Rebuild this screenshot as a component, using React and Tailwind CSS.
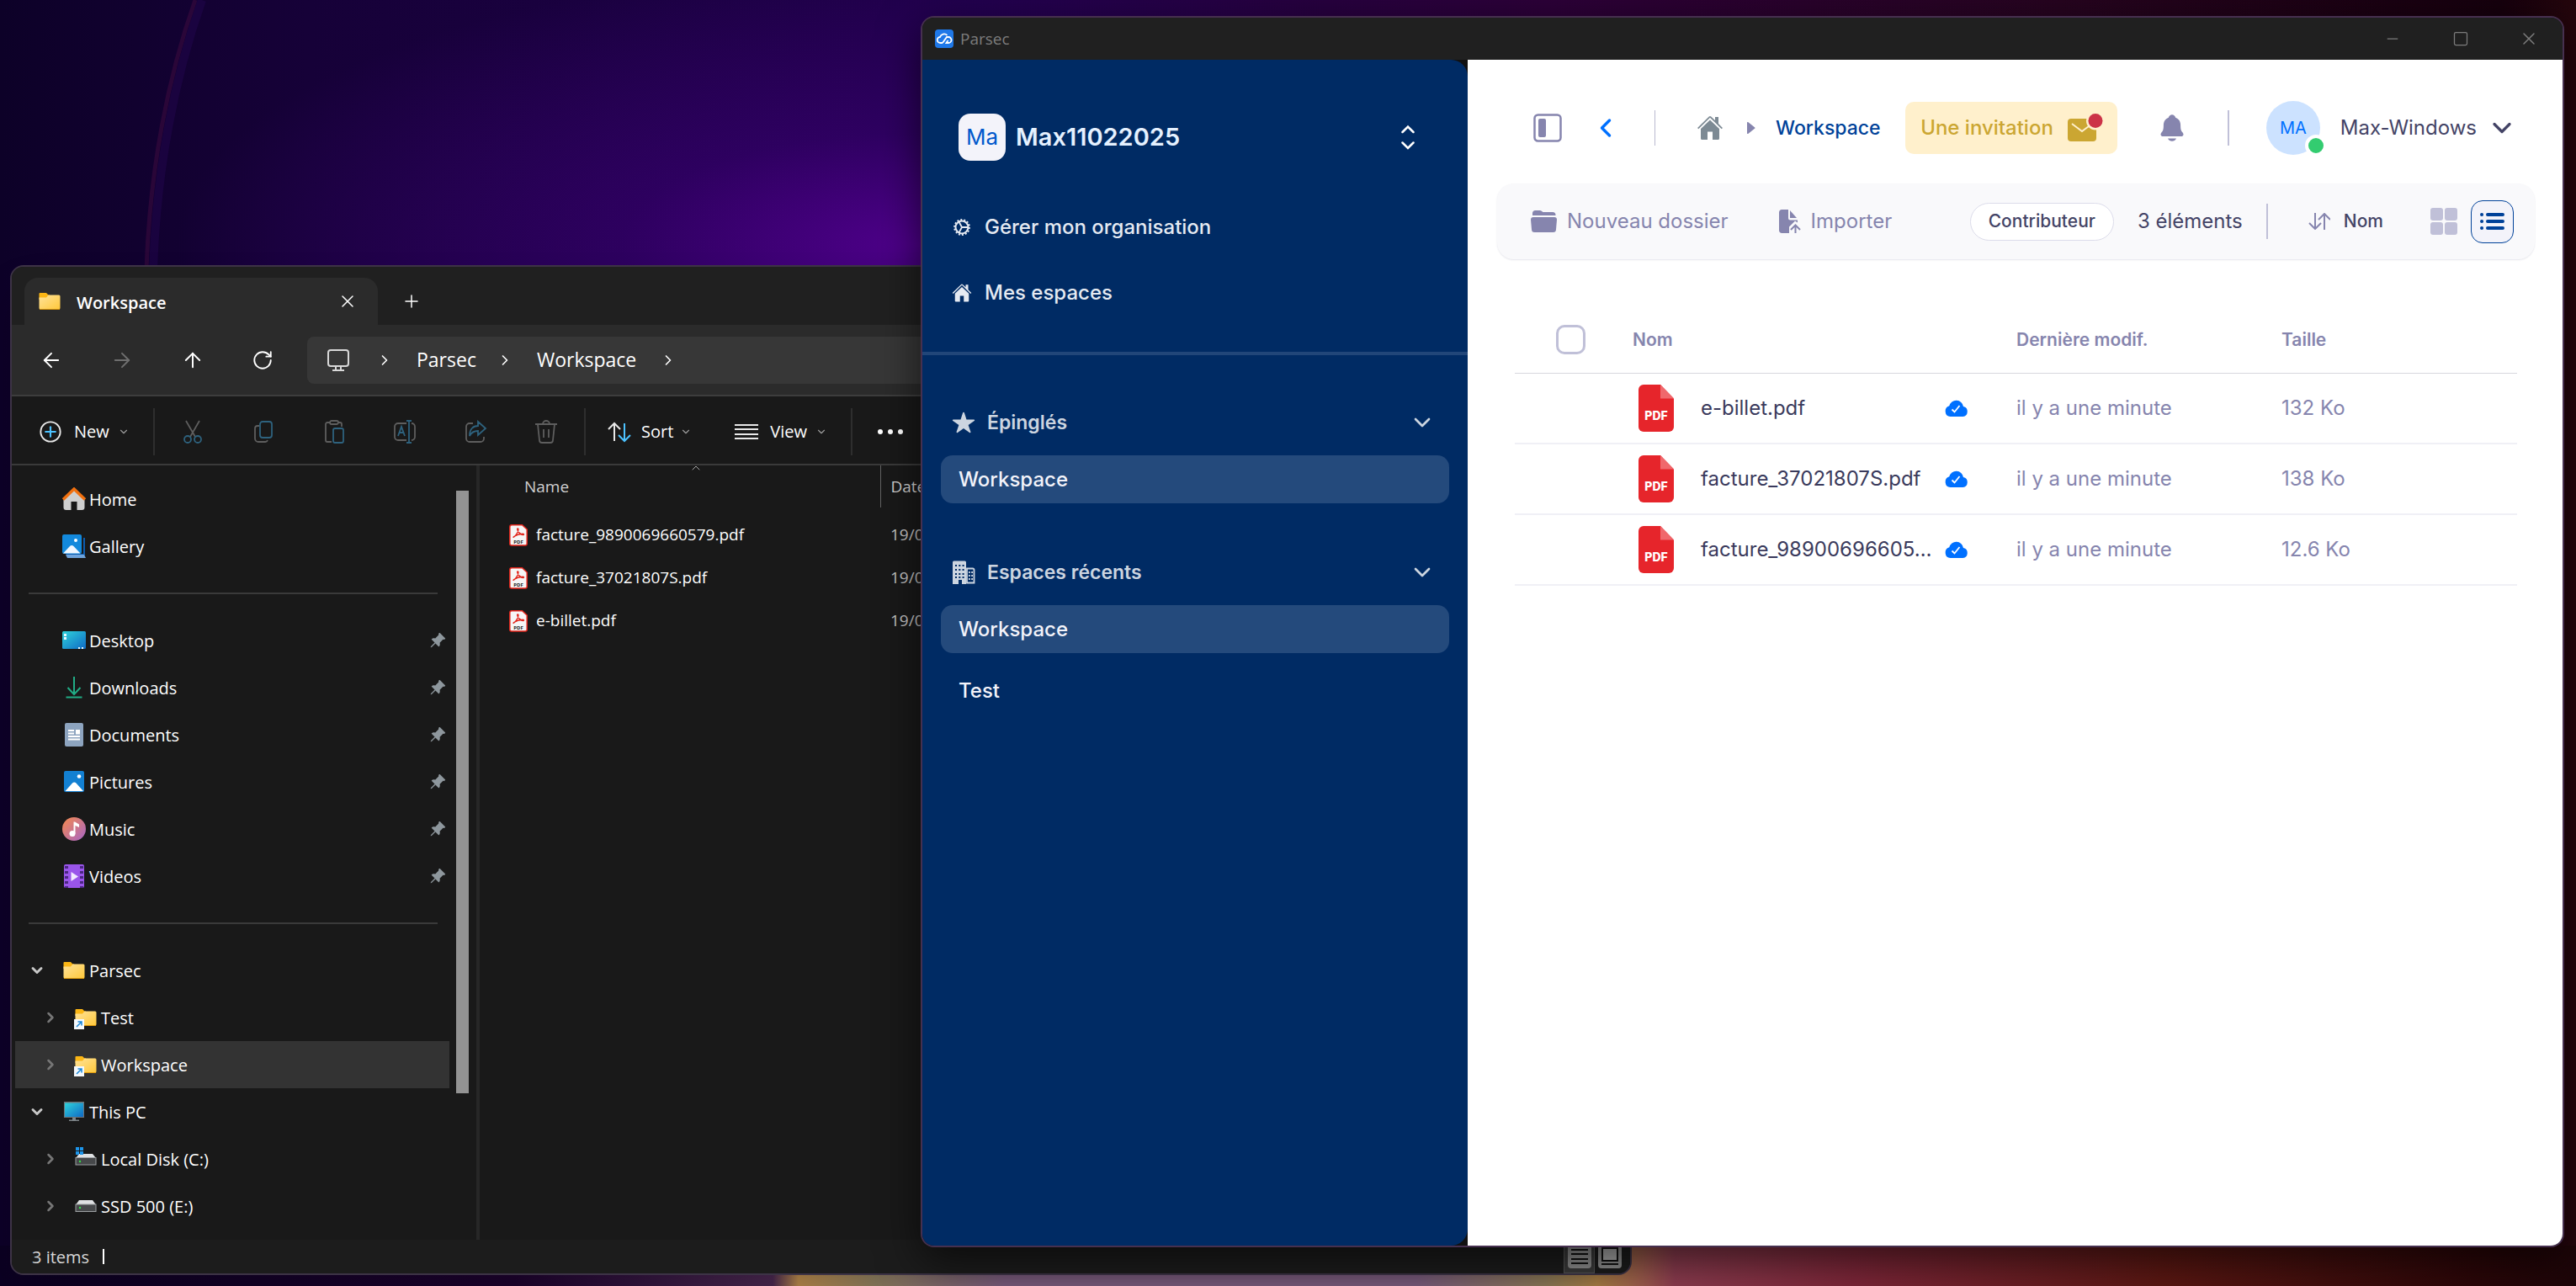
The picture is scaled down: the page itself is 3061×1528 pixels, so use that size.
import {
  ArrowLeft,
  ArrowRight,
  ArrowUp,
  ChevronDown,
  ChevronLeft,
  ChevronRight,
  ChevronUp,
  CirclePlus,
  Minus,
  Plus,
  RotateCw,
  Square,
  X,
} from 'lucide-react'
import { BsPinAngleFill } from 'react-icons/bs'
import { IoNotifications, IoStar } from 'react-icons/io5'

const quickAccess = [
  { label: 'Desktop', icon: DesktopIcon },
  { label: 'Downloads', icon: DownloadsIcon },
  { label: 'Documents', icon: DocumentsIcon },
  { label: 'Pictures', icon: PicturesIcon },
  { label: 'Music', icon: MusicIcon },
  { label: 'Videos', icon: VideosIcon },
]

const explorerFiles = [
  'facture_9890069660579.pdf',
  'facture_37021807S.pdf',
  'e-billet.pdf',
]

const parsecFiles = [
  { name: 'e-billet.pdf', size: '132 Ko' },
  { name: 'facture_37021807S.pdf', size: '138 Ko' },
  { name: 'facture_98900696605…', size: '12.6 Ko' },
]

export default function App() {
  return (
    <div className="relative h-screen w-full overflow-hidden bg-[#12022c]">
      <Wallpaper />
      <ExplorerWindow />
      <ParsecWindow />
    </div>
  )
}

function Wallpaper() {
  return (
    <div className="absolute inset-0" aria-hidden="true">
      <div className="absolute inset-0 bg-[linear-gradient(90deg,#0d0128_0%,#160138_12%,#1f004a_38%,#2c0038_60%,#26041f_80%,#16000d_97%,#25060c_100%)]" />
      <div className="absolute inset-0 bg-[radial-gradient(ellipse_880px_330px_at_1090px_290px,#4e008a_0%,#34006abb_40%,transparent_100%)]" />
      <svg viewBox="0 0 300 320" className="absolute top-0 left-0 h-80 w-[300px]" fill="none">
        <path d="M232 0C200 90 178 200 174 320" stroke="#3a0a3e" strokeWidth="5" opacity="0.6" />
        <path d="M240 0C208 90 186 200 182 320" stroke="#22064e" strokeWidth="10" opacity="0.5" />
      </svg>
      <div className="absolute inset-x-0 bottom-0 h-12 bg-[linear-gradient(90deg,#0b0122_0%,#1d032e_20%,#4a2850_30%,#b98a4c_31%,#8f7f60_34%,#86658a_39%,#86658a_55%,#9a8560_60%,#b98a4c_62%,#8a3b4e_65%,#7c2638_72%,#5a1712_84%,#2b0608_96%,#1d0508_100%)]" />
    </div>
  )
}

/* ---------- Windows explorer ---------- */

function ExplorerWindow() {
  return (
    <section
      aria-label="Workspace"
      className="absolute top-[315px] right-[1122px] bottom-[13px] left-3 flex flex-col overflow-hidden rounded-2xl border-2 border-[#3d3346] bg-[#191919] font-['Open_Sans',sans-serif] text-xl text-white shadow-2xl"
    >
      <div className="flex h-[69px] shrink-0 items-end bg-[#202020] pl-[15px]">
        <div className="flex h-14 w-[420px] items-center rounded-t-2xl bg-[#2b2b2b] pr-6 pl-4">
          <FolderIcon className="size-7" />
          <h1 className="ml-[18px] pt-1 font-semibold">Workspace</h1>
          <button aria-label="Close tab" className="ml-auto">
            <X className="size-6" strokeWidth={1.5} />
          </button>
        </div>
        <button aria-label="New tab" className="ml-7 flex h-14 items-center">
          <Plus className="size-6" strokeWidth={1.5} />
        </button>
      </div>

      <div className="flex h-[85px] shrink-0 items-center border-b-2 border-[#3d3d3d] bg-[#2b2b2b] pl-[33px]">
        <nav aria-label="History" className="flex items-center gap-14">
          <button aria-label="Back">
            <ArrowLeft className="size-7" strokeWidth={1.7} />
          </button>
          <button aria-label="Forward" className="text-[#6f6f6f]">
            <ArrowRight className="size-7" strokeWidth={1.7} />
          </button>
          <button aria-label="Up">
            <ArrowUp className="size-7" strokeWidth={1.7} />
          </button>
          <button aria-label="Refresh">
            <RotateCw className="size-[26px]" strokeWidth={1.7} />
          </button>
        </nav>
        <div className="ml-10 flex h-14 flex-1 items-center rounded-lg bg-[#373737] pl-6 text-[23px]">
          <MonitorIcon />
          <ChevronRight className="ml-8 size-5" />
          <span className="ml-7">Parsec</span>
          <ChevronRight className="ml-6 size-5" />
          <span className="ml-7">Workspace</span>
          <ChevronRight className="ml-7 size-5" />
        </div>
      </div>

      <CommandBar />

      <div className="flex min-h-0 flex-1">
        <ExplorerTree />
        <ExplorerFiles />
      </div>

      <footer className="flex h-10 shrink-0 items-center bg-[#1c1c1c] pl-6 text-[#d6d6d6]">
        <span className="pt-0.5">3 items</span>
        <span className="ml-4 h-[18px] w-0.5 bg-white" />
        <button
          aria-label="Details view"
          className="ml-auto flex h-full w-[37px] items-center justify-center border border-[#555] bg-[#3a3a3a]"
        >
          <svg viewBox="0 0 28 28" className="size-7">
            <rect width="28" height="28" rx="4" fill="#8f8f8f" />
            <path d="M4 6h20M4 11h20M4 17h20M4 22h20" stroke="#111" strokeWidth="2" />
          </svg>
        </button>
        <button aria-label="Large icons view" className="mr-2.5 ml-1">
          <svg viewBox="0 0 28 28" className="size-7">
            <rect width="28" height="28" rx="4" fill="#8f8f8f" />
            <rect x="5" y="4" width="18" height="15" fill="#ababab" stroke="#111" strokeWidth="2" />
            <path d="M4 23h20" stroke="#111" strokeWidth="2" />
          </svg>
        </button>
      </footer>
    </section>
  )
}

function CommandBar() {
  return (
    <div className="flex h-[82px] shrink-0 items-center border-b-2 border-[#3a3a3a] pt-1 pl-8">
      <button className="flex w-[136px] items-center">
        <span className="relative">
          <CirclePlus className="size-7 text-[#e8e8e8]" strokeWidth={1.6} />
          <Plus className="absolute inset-0 m-auto size-5 text-[#4cc2ff]" strokeWidth={2.5} />
        </span>
        <span className="ml-3.5">New</span>
        <ChevronDown className="ml-2.5 size-3.5 text-[#9c9c9c]" />
      </button>
      <CommandSeparator />
      <div className="flex gap-14 px-[31px] text-[#5e5e5e]">
        <IconButton label="Cut">
          <path d="M6 1l11 19M22 1L11 20" />
          <circle cx="8" cy="23" r="4" stroke="#2e627e" />
          <circle cx="20" cy="23" r="4" stroke="#2e627e" />
        </IconButton>
        <IconButton label="Copy">
          <path d="M9 7H7a3 3 0 0 0-3 3v12a4 4 0 0 0 4 4h8a3 3 0 0 0 3-2" />
          <rect x="10" y="2" width="14" height="19" rx="3" stroke="#2e627e" />
        </IconButton>
        <IconButton label="Paste">
          <path d="M10 3H6a2 2 0 0 0-2 2v19a2 2 0 0 0 2 2h5M19 3h2a2 2 0 0 1 2 2v3" />
          <rect x="9" y="1" width="10" height="4" rx="2" />
          <rect x="13" y="10" width="12" height="17" rx="2" stroke="#2e627e" />
        </IconButton>
        <IconButton label="Rename">
          <path d="M16 4H6a4 4 0 0 0-4 4v12a4 4 0 0 0 4 4h10M22 4a4 4 0 0 1 4 4v12a4 4 0 0 1-4 4" />
          <path d="M6 19l4-11 4 11M7 15h6M19 1v26M16 1h6M16 27h6" stroke="#2e627e" />
        </IconButton>
        <IconButton label="Share">
          <path d="M11 4H7a4 4 0 0 0-4 4v14a4 4 0 0 0 4 4h13a4 4 0 0 0 4-4v-2" />
          <path d="M17 2l9 8-9 8v-5c-5 0-8 2-10 6 0-8 4-12 10-12z" stroke="#2e627e" />
        </IconButton>
        <IconButton label="Delete">
          <path d="M1 5h26M10 5a4 4 0 0 1 8 0M4 5l2 19a3 3 0 0 0 3 3h10a3 3 0 0 0 3-3l2-19M11 11v10M17 11v10" />
        </IconButton>
      </div>
      <CommandSeparator />
      <button className="ml-[26px] flex items-center">
        <svg viewBox="0 0 28 28" className="size-7" fill="none" strokeWidth="2">
          <path d="M8 25V4M1 11l7-7 7 7" stroke="#e8e8e8" />
          <path d="M20 4v21M13 18l7 7 7-7" stroke="#4cc2ff" />
        </svg>
        <span className="ml-3">Sort</span>
        <ChevronDown className="ml-2 size-3.5 text-[#9c9c9c]" />
      </button>
      <button className="ml-[51px] flex items-center">
        <svg viewBox="0 0 28 28" className="size-7" stroke="#e8e8e8" strokeWidth="2">
          <path d="M0 6h28M0 11h28M0 17h28M0 22h28" />
        </svg>
        <span className="ml-3.5">View</span>
        <ChevronDown className="ml-2.5 size-3.5 text-[#9c9c9c]" />
      </button>
      <span className="ml-7 h-14 w-0.5 bg-[#2e2e2e]" />
      <button aria-label="See more" className="ml-7 flex gap-1.5 px-0.5">
        <span className="size-1.5 rounded-full bg-white" />
        <span className="size-1.5 rounded-full bg-white" />
        <span className="size-1.5 rounded-full bg-white" />
      </button>
    </div>
  )
}

function CommandSeparator() {
  return <span className="h-14 w-0.5 shrink-0 bg-[#2e2e2e]" />
}

function IconButton({ label, children }) {
  return (
    <button aria-label={label} className="size-7 shrink-0">
      <svg
        viewBox="0 0 28 28"
        className="size-7"
        fill="none"
        stroke="currentColor"
        strokeWidth="1.8"
      >
        {children}
      </svg>
    </button>
  )
}

function ExplorerTree() {
  return (
    <aside className="flex w-[556px] shrink-0 border-r-4 border-[#272727]">
      <ul className="flex-1 pt-3 pl-1">
        <TreeRow icon={HomeIcon} label="Home" />
        <TreeRow icon={GalleryIcon} label="Gallery" />
        <TreeDivider />
        {quickAccess.map((item) => (
          <TreeRow key={item.label} icon={item.icon} label={item.label} pinned />
        ))}
        <TreeDivider />
        <TreeRow icon={FolderIcon} label="Parsec" expanded />
        <TreeRow icon={LinkedFolderIcon} label="Test" nested />
        <TreeRow icon={LinkedFolderIcon} label="Workspace" nested selected />
        <TreeRow icon={PcIcon} label="This PC" expanded />
        <TreeRow icon={SystemDiskIcon} label="Local Disk (C:)" nested />
        <TreeRow icon={DiskIcon} label="SSD 500 (E:)" nested />
      </ul>
      <div className="ml-2 w-6 pt-[30px]">
        <div className="h-[716px] w-[15px] bg-[#939393]" />
      </div>
    </aside>
  )
}

function TreeRow({ icon: Icon, label, pinned, expanded, nested, selected }) {
  return (
    <li
      className={`flex h-14 items-center pr-1 ${selected ? 'bg-[#333333]' : ''}`}
    >
      <span
        className={`flex shrink-0 items-center ${nested ? 'w-[70px] pl-8' : 'w-14 pl-4'}`}
      >
        {expanded && <ChevronDown className="size-5 text-[#c8c8c8]" strokeWidth={3.5} />}
        {nested && <ChevronRight className="size-5 text-[#777]" strokeWidth={3} />}
      </span>
      <Icon className="size-7 shrink-0" />
      <span className="ml-1 pt-0.5">{label}</span>
      {pinned && <BsPinAngleFill className="ml-auto size-5 text-[#8e979d]" />}
    </li>
  )
}

function TreeDivider() {
  return (
    <li className="flex h-14 items-center pr-3.5 pl-4" aria-hidden="true">
      <span className="h-0.5 w-full bg-[#3a3a3a]" />
    </li>
  )
}

function ExplorerFiles() {
  return (
    <div className="relative flex-1">
      <ChevronUp className="absolute top-[-5px] left-[249px] size-4 text-[#aaa]" strokeWidth={1.5} />
      <table className="w-full table-fixed text-left text-[19px]">
        <thead>
          <tr className="h-[50px] text-[#d0d0d0]">
            <th className="w-[476px] border-r border-[#636363] pl-[53px] font-normal">
              Name
            </th>
            <th className="pl-3 font-normal">Date</th>
          </tr>
        </thead>
        <tbody>
          <tr className="h-[7px]" />
          {explorerFiles.map((name) => (
            <tr key={name} className="h-[51px]">
              <td className="pl-[35px]">
                <span className="flex items-center">
                  <AcrobatIcon />
                  <span className="ml-2.5">{name}</span>
                </span>
              </td>
              <td className="pl-3 text-[#c4c4c4]">19/0</td>
            </tr>
          ))}
        </tbody>
      </table>
    </div>
  )
}

/* ---------- Parsec ---------- */

function ParsecWindow() {
  return (
    <section
      aria-label="Parsec"
      className="absolute top-[19px] right-3.5 bottom-[46px] left-[1094px] flex flex-col overflow-hidden rounded-2xl border-2 border-[#46304f] bg-[#111] shadow-[0_16px_50px_0_rgba(0,0,0,0.6)]"
    >
      <header className="flex h-[50px] shrink-0 items-center bg-[#202020] pl-[15px] font-['Open_Sans',sans-serif] text-[19px] text-[#7c7c7c]">
        <ParsecLogo />
        <span className="ml-2">Parsec</span>
        <div className="ml-auto flex h-full">
          <button aria-label="Minimize" className="flex w-[81px] items-center justify-center">
            <Minus className="size-5" strokeWidth={1.5} />
          </button>
          <button aria-label="Maximize" className="flex w-[81px] items-center justify-center">
            <Square className="size-5" strokeWidth={1.5} />
          </button>
          <button aria-label="Close" className="flex w-[81px] items-center justify-center">
            <X className="size-6" strokeWidth={1.5} />
          </button>
        </div>
      </header>
      <div className="flex min-h-0 flex-1 font-['Inter',sans-serif]">
        <ParsecSidebar />
        <main className="min-w-0 flex-1 bg-white">
          <ParsecHeader />
          <Toolbar />
          <FileTable />
        </main>
      </div>
    </section>
  )
}

function ParsecSidebar() {
  return (
    <aside className="w-[648px] shrink-0 rounded-r-[20px] bg-[#002b64] text-2xl font-medium">
      <button className="mt-16 flex h-14 w-full items-center pr-[63px] pl-[43px]">
        <span className="flex size-14 items-center justify-center rounded-[14px] bg-[#f3f3fa] text-[26px] font-normal text-[#0058cc]">
          Ma
        </span>
        <span className="ml-3 text-[29px] font-semibold text-[#e5f1ff]">
          Max11022025
        </span>
        <svg
          viewBox="0 0 16 30"
          className="ml-auto h-[30px] w-4"
          fill="none"
          stroke="#fff"
          strokeWidth="2.5"
          strokeLinecap="round"
        >
          <path d="M1.500 9L8 2.500 14.500 9M1.500 21.500L8 28l6.500-6.500" />
        </svg>
      </button>

      <nav className="mt-10 border-b-4 border-[#214679] pb-[31px] text-[#e5eaf2]">
        <a href="#organisation" className="flex h-[78px] items-center pl-[35px]">
          <CogIcon />
          <span className="ml-[15px]">Gérer mon organisation</span>
        </a>
        <a href="#espaces" className="flex h-[78px] items-center pl-[35px]">
          <HouseIcon className="size-6" />
          <span className="ml-[15px]">Mes espaces</span>
        </a>
      </nav>

      <div className="mt-[60px] space-y-[62px] px-[22px]">
        <SidebarGroup title="Épinglés" icon={<IoStar className="size-7" />}>
          <SidebarLink active>Workspace</SidebarLink>
        </SidebarGroup>
        <SidebarGroup title="Espaces récents" icon={<BuildingIcon />}>
          <SidebarLink active>Workspace</SidebarLink>
          <SidebarLink>Test</SidebarLink>
        </SidebarGroup>
      </div>
    </aside>
  )
}

function SidebarGroup({ title, icon, children }) {
  return (
    <section>
      <button className="mb-[19px] flex h-10 w-full items-center pr-4 pl-[13px] text-[23px] font-semibold text-[#ccd5e0]">
        {icon}
        <span className="ml-3.5">{title}</span>
        <ChevronDown className="ml-auto size-8" />
      </button>
      <div className="space-y-4">{children}</div>
    </section>
  )
}

function SidebarLink({ active, children }) {
  return (
    <a
      href="#workspace"
      className={`flex h-[57px] items-center rounded-[14px] pl-[21px] text-[#f3f3fa] ${active ? 'bg-[#244a7c]' : ''}`}
    >
      {children}
    </a>
  )
}

function ParsecHeader() {
  return (
    <header className="flex items-center pt-[49px] pr-[54px] pb-[34px] pl-[78px] text-2xl">
      <button aria-label="Menu">
        <svg viewBox="0 0 34 34" className="size-[34px]">
          <rect x="1.5" y="1.5" width="31" height="31" rx="4" fill="none" stroke="#8685ae" strokeWidth="2.5" />
          <rect x="6" y="6" width="9" height="22" rx="2" fill="#8685ae" />
        </svg>
      </button>
      <button aria-label="Retour" className="ml-[34px] text-[#0070ff]">
        <ChevronLeft className="size-9" strokeWidth={2.3} />
      </button>
      <span className="ml-10 h-[42px] w-px bg-[#b9b9d0]" />
      <nav className="ml-[49px] flex items-center">
        <a href="#home" aria-label="Mes espaces">
          <HouseIcon className="size-8 text-[#7d8a94]" />
        </a>
        <svg viewBox="0 0 10 14" className="ml-7 h-3.5 w-2.5" fill="#8685ae">
          <path d="M0 1a1 1 0 0 1 1.500-.8L9 6.200a1 1 0 0 1 0 1.600L1.500 13.800A1 1 0 0 1 0 13z" />
        </svg>
        <a href="#workspace" className="ml-6 text-[23px] font-medium text-[#004299]">
          Workspace
        </a>
      </nav>

      <button className="ml-auto flex h-[62px] items-center rounded-[10px] bg-[#fff0cc] pr-4 pl-[18px] font-medium text-[#cba632]">
        Une invitation
        <MailIcon />
      </button>
      <button aria-label="Notifications" className="ml-[47px] text-[#8685ae]">
        <IoNotifications className="size-9" />
      </button>
      <span className="ml-12 h-[42px] w-0.5 bg-[#c0c0d8]" />
      <button className="ml-11 flex items-center text-[#444466]">
        <span className="relative flex size-16 items-center justify-center rounded-full bg-[#cce2ff] text-xl text-[#0070ff]">
          MA
          <span className="absolute -right-2 -bottom-0.5 size-[26px] rounded-full border-4 border-white bg-[#33cc70]" />
        </span>
        <span className="ml-6">Max-Windows</span>
        <ChevronDown className="ml-3 size-9" strokeWidth={2.2} />
      </button>
    </header>
  )
}

function Toolbar() {
  return (
    <div className="mr-[33px] ml-[35px] flex h-[90px] items-center rounded-[20px] bg-[#f9f9fb] pr-[25px] pl-10 text-2xl text-[#444466] shadow-[0_1px_2px_rgba(40,40,90,0.12)]">
      <button className="flex items-center text-[#8685ae]">
        <svg viewBox="0 0 31 26" className="h-[26px] w-[31px]" fill="currentColor">
          <path d="M2 6V3.500A3.500 3.500 0 0 1 5.500 0h5c1 0 2 .4 2.700 1l1.200 1H26a3.500 3.500 0 0 1 3.500 3.500V6z" />
          <path d="M0 11a3 3 0 0 1 3-3h25a3 3 0 0 1 3 3l-1 11.500a3.500 3.500 0 0 1-3.500 3.500h-22A3.500 3.500 0 0 1 1 22.500z" />
        </svg>
        <span className="ml-3">Nouveau dossier</span>
      </button>
      <button className="ml-[60px] flex items-center text-[#8685ae]">
        <svg viewBox="0 0 26 28" className="h-7 w-[26px]">
          <path d="M3.500 0H11v10a2.500 2.500 0 0 0 2.500 2.500H22v3l-3-2-7 7V28H3.500A3.500 3.500 0 0 1 0 24.500v-21A3.500 3.500 0 0 1 3.500 0z" fill="currentColor" />
          <path d="M13 1l8 9h-8z" fill="currentColor" />
          <path d="M19.500 28v-9M14 24l5.500-5.500L25 24" fill="none" stroke="currentColor" strokeWidth="2" />
        </svg>
        <span className="ml-3">Importer</span>
      </button>

      <span className="ml-auto flex h-[45px] items-center rounded-full border border-[#dcdcea] bg-white px-[21px] text-[21px] font-medium">
        Contributeur
      </span>
      <span className="ml-7">3 éléments</span>
      <span className="ml-7 h-[42px] w-0.5 bg-[#c0c0d8]" />
      <button className="ml-12 flex items-center text-[21px] font-medium">
        <svg viewBox="0 0 26 20" className="h-5 w-[26px]" fill="none" stroke="#8685ae" strokeWidth="2">
          <path d="M8 0v19M1 12l7 7 7-7M19 20V1M12 8l7-7 7 7" />
        </svg>
        <span className="ml-4">Nom</span>
      </button>
      <button aria-label="Grille" className="ml-14">
        <svg viewBox="0 0 32 32" className="size-8" fill="#c0c0d8">
          <rect width="15" height="15" rx="3" />
          <rect x="17" width="15" height="15" rx="3" />
          <rect y="17" width="15" height="15" rx="3" />
          <rect x="17" y="17" width="15" height="15" rx="3" />
        </svg>
      </button>
      <button
        aria-label="Liste"
        className="ml-4 flex size-[51px] items-center justify-center rounded-[14px] border border-[#004299] bg-[#f3f3fa]"
      >
        <svg viewBox="0 0 30 22" className="h-[22px] w-[30px]" stroke="#004299" strokeWidth="4" strokeLinecap="round">
          <path d="M2 3h.1M2 11h.1M2 19h.1M9 3h18M9 11h18M9 19h18" />
        </svg>
      </button>
    </div>
  )
}

function FileTable() {
  return (
    <div className="pt-[57px] pr-[54px] pl-14">
      <table className="w-full table-fixed text-left text-2xl text-[#8685ae]">
        <thead>
          <tr className="h-[78px] border-b border-[#d8d8de] text-[21px]">
            <th className="w-[140px] pl-[49px]">
              <input
                type="checkbox"
                aria-label="Tout sélectionner"
                className="block size-[35px] appearance-none rounded-[10px] border-3 border-[#c0c0d8]"
              />
            </th>
            <th className="font-semibold">Nom</th>
            <th className="w-[315px] font-semibold">Dernière modif.</th>
            <th className="w-[280px] font-semibold">Taille</th>
          </tr>
        </thead>
        <tbody>
          {parsecFiles.map((file) => (
            <tr key={file.name} className="h-[84px] border-b-2 border-[#f0f0f6]">
              <td />
              <td>
                <span className="flex items-center pr-[57px] pl-[7px]">
                  <PdfIcon />
                  <span className="ml-8 flex-1 whitespace-nowrap text-[#3a3a5c]">{file.name}</span>
                  <CloudIcon />
                </span>
              </td>
              <td>il y a une minute</td>
              <td>{file.size}</td>
            </tr>
          ))}
        </tbody>
      </table>
    </div>
  )
}

/* ---------- Icons ---------- */

function FolderIcon({ className }) {
  return (
    <svg viewBox="0 0 28 28" className={className}>
      <defs>
        <linearGradient id="folder" x1="0" y1="0" x2="1" y2="1">
          <stop offset="0" stopColor="#ffe39a" />
          <stop offset="1" stopColor="#ffc83a" />
        </linearGradient>
      </defs>
      <path d="M1.500 5a1 1 0 0 1 1-1h7.500l2.500 2.500H14V12H1.500z" fill="#fbb615" />
      <path d="M1.500 9.500H10l2.500-3H25a1.500 1.500 0 0 1 1.500 1.500v14a1.500 1.500 0 0 1-1.500 1.500H3A1.500 1.500 0 0 1 1.500 22z" fill="url(#folder)" />
      <path d="M2 23.500h24" stroke="#e09b0c" />
    </svg>
  )
}

function LinkedFolderIcon({ className }) {
  return (
    <span className={`relative ${className}`}>
      <FolderIcon className="size-7" />
      <svg viewBox="0 0 12 12" className="absolute bottom-0 left-0 size-3">
        <rect width="12" height="12" fill="#f4f8fc" />
        <path d="M3 9l5.500-5.500M4.500 3H9v4.500" fill="none" stroke="#1b87d6" strokeWidth="1.500" />
      </svg>
    </span>
  )
}

function HomeIcon({ className }) {
  return (
    <svg viewBox="0 0 28 28" className={className}>
      <path d="M1.500 13L14 1l12.500 12v11a3 3 0 0 1-3 3h-6V17h-7v10h-6a3 3 0 0 1-3-3z" fill="#cfcfcf" />
      <path d="M1 14.500L14 2l13 12.500" fill="none" stroke="#f0700f" strokeWidth="3.500" />
    </svg>
  )
}

function GalleryIcon({ className }) {
  return (
    <svg viewBox="0 0 28 28" className={className}>
      <path d="M6 25h21V4h-2v19H4z" fill="#0c5cb0" />
      <path d="M4 24h22l2 4H6z" fill="#6ea3dc" />
      <rect width="23" height="23" rx="2" fill="#1389dc" />
      <path d="M1 22.500l8-8.500a3 3 0 0 1 4.500 0l8 8.500z" fill="#f0f7ff" />
      <circle cx="16" cy="7" r="2" fill="#fff" />
    </svg>
  )
}

function DesktopIcon({ className }) {
  return (
    <svg viewBox="0 0 28 28" className={className}>
      <defs>
        <linearGradient id="desktop" x1="0" y1="0" x2="1" y2="1">
          <stop offset="0" stopColor="#2fd3dc" />
          <stop offset="1" stopColor="#0f69c4" />
        </linearGradient>
      </defs>
      <rect y="3" width="28" height="21" rx="1.500" fill="url(#desktop)" />
      <path d="M2 6h3v3H2zM2 10h3v3H2zM19 22h2v2h-2zM23 22h2v2h-2z" fill="#e8fbff" />
    </svg>
  )
}

function DownloadsIcon({ className }) {
  return (
    <svg viewBox="0 0 28 28" className={className} fill="none" stroke="#21ad86" strokeWidth="2">
      <path d="M14 1v21M6.500 14l7.500 8 7.500-8M4.500 25.500h19" />
    </svg>
  )
}

function DocumentsIcon({ className }) {
  return (
    <svg viewBox="0 0 28 28" className={className}>
      <rect x="3" width="22" height="28" rx="2" fill="#8da4bf" />
      <path d="M7 9h7M7 12.500h7M7 16h14M7 19.500h14" stroke="#fff" strokeWidth="1.800" />
      <rect x="16" y="8" width="5" height="5.500" fill="#fff" />
    </svg>
  )
}

function PicturesIcon({ className }) {
  return (
    <svg viewBox="0 0 28 28" className={className}>
      <rect x="2" y="1" width="24" height="25" rx="2" fill="#1380d2" />
      <path d="M3.500 25l8.500-9.500a3 3 0 0 1 4.500 0L25 25z" fill="#fff" />
      <circle cx="20" cy="7.500" r="2.300" fill="#fff" />
    </svg>
  )
}

function MusicIcon({ className }) {
  return (
    <svg viewBox="0 0 28 28" className={className}>
      <defs>
        <linearGradient id="music" x1="0" y1="0" x2="1" y2="1">
          <stop offset="0" stopColor="#f58a4c" />
          <stop offset="1" stopColor="#a765c8" />
        </linearGradient>
      </defs>
      <circle cx="14" cy="14" r="14" fill="url(#music)" />
      <circle cx="12" cy="19.500" r="3.500" fill="#fff" />
      <path d="M13.500 5.500h1.500l5 3v3.500l-4.500-2v9.500h-2z" fill="#fff" />
    </svg>
  )
}

function VideosIcon({ className }) {
  return (
    <svg viewBox="0 0 28 28" className={className}>
      <rect x="2" width="24" height="28" rx="2" fill="#9a55ea" />
      <path d="M5 2v26M23 2v26" stroke="#4b2783" strokeWidth="4" strokeDasharray="3 3" />
      <path d="M10.500 9v11l8.500-5.500z" fill="#f2e9ff" />
    </svg>
  )
}

function PcIcon({ className }) {
  return (
    <svg viewBox="0 0 28 28" className={className}>
      <rect x="2" y="2" width="24" height="19" fill="#6d7478" />
      <rect x="3" y="3.500" width="22" height="16.500" fill="url(#desktop)" />
      <path d="M12 21h4v2.500h4v1.500H8v-1.500h4z" fill="#7d8488" />
    </svg>
  )
}

function DiskIcon({ className }) {
  return (
    <svg viewBox="0 0 28 28" className={className}>
      <path d="M6 7h16l4 5.500H2z" fill="#dfe1e3" />
      <rect x="2" y="12" width="24" height="8.500" fill="#46484a" stroke="#9c9fa2" />
      <circle cx="7" cy="16" r="1.200" fill="#35e04a" />
    </svg>
  )
}

function SystemDiskIcon({ className }) {
  return (
    <svg viewBox="0 0 28 28" className={className}>
      <path d="M6 8h16l4 5H2z" fill="#dfe1e3" />
      <rect x="2" y="12.500" width="24" height="8.500" fill="#46484a" stroke="#9c9fa2" />
      <circle cx="7" cy="17" r="1.200" fill="#35e04a" />
      <path d="M2 0h4v4H2zM7 0h4v4H7zM2 5h4v4H2zM7 5h4v4H7z" fill="#1d95ea" />
    </svg>
  )
}

function MonitorIcon() {
  return (
    <svg viewBox="0 0 26 26" className="size-[26px]" fill="none" stroke="#d8d8d8" strokeWidth="2">
      <rect x="1" y="1" width="24" height="19" rx="3" />
      <path d="M10 20v5M16 20v5M6 25h14" />
    </svg>
  )
}

function AcrobatIcon() {
  return (
    <svg viewBox="0 0 22 26" className="h-[26px] w-[22px] shrink-0">
      <path d="M3 .8h12.500L21.200 6v17a2 2 0 0 1-2 2H2.800a2 2 0 0 1-2-2V3A2.200 2.200 0 0 1 3 .8z" fill="#f6f6f6" stroke="#e2251b" strokeWidth="1.500" />
      <path d="M5.500 15c2-1 5-5 5.500-9 0-1.500-1.500-1.500-1.300 0 .5 3 4 6.500 7 6.500 1.500-.2.700-1.500-1-1.300-3 .2-7 1.300-10 3.300-1 .8-.8 1.200-.2.500z" fill="none" stroke="#e2251b" strokeWidth="1.400" />
      <text x="11" y="22.500" textAnchor="middle" fontSize="6" fontWeight="700" fill="#222">
        PDF
      </text>
    </svg>
  )
}

function ParsecLogo() {
  return (
    <svg viewBox="0 0 22 22" className="size-[22px]">
      <rect width="22" height="22" rx="4" fill="#1f78e8" />
      <path d="M9 16H6.500a3.500 3.500 0 0 1-.5-7 5 5 0 0 1 8.500-2M9 16l5-7h2a3.500 3.500 0 0 1 0 7h-2.500l2-3" fill="none" stroke="#fff" strokeWidth="1.800" />
    </svg>
  )
}

function CogIcon() {
  return (
    <svg viewBox="0 0 24 24" className="size-6" fill="none" stroke="currentColor">
      <circle cx="12" cy="12" r="7.500" strokeWidth="2" />
      <circle cx="12" cy="12" r="9" strokeWidth="1.800" strokeDasharray="2 2.040" />
      <path d="M12 12h7M12 12l-3.500-6.500M12 12l-3.500 6.500" strokeWidth="1.800" />
    </svg>
  )
}

function HouseIcon({ className }) {
  return (
    <svg viewBox="0 0 32 32" className={className} fill="currentColor">
      <path d="M16 6.500L27 17v11.500a1.500 1.500 0 0 1-1.500 1.500H19v-9.500h-6V30H6.500A1.500 1.500 0 0 1 5 28.500V17z" />
      <path d="M22 3h4v8l5 5-1.300 1.300L16 3.800 2.300 17.300 1 16 14.800 2.500a1.700 1.700 0 0 1 2.400 0L22 7z" />
    </svg>
  )
}

function BuildingIcon() {
  return (
    <svg viewBox="0 0 28 28" className="size-7">
      <path d="M1 2a1.500 1.500 0 0 1 1.500-1.500h13A1.500 1.500 0 0 1 17 2v26h-5v-5H8v5H1z" fill="currentColor" />
      <path d="M18 9.500h7a1.500 1.500 0 0 1 1.500 1.500v15.500H18z" fill="none" stroke="currentColor" strokeWidth="1.800" />
      <path d="M4 6h11M4 11h11M4 16h11M4 20h11" stroke="#002b64" strokeWidth="1.800" strokeDasharray="2 2.300" />
      <path d="M20 14h5M20 18h5M20 22h5" stroke="currentColor" strokeWidth="1.800" strokeDasharray="1.800 1.400" />
    </svg>
  )
}

function MailIcon() {
  return (
    <svg viewBox="0 0 44 36" className="ml-4 h-9 w-11">
      <rect x="1" y="7" width="34" height="27" rx="4" fill="#cba632" />
      <path d="M6 13l12 9 12-9" fill="none" stroke="#fff0cc" strokeWidth="2" />
      <circle cx="34" cy="9.500" r="11" fill="#fff0cc" />
      <circle cx="34" cy="9.500" r="8.500" fill="#cc3347" />
    </svg>
  )
}

function PdfIcon() {
  return (
    <svg viewBox="0 0 42 56" className="h-14 w-[42px] shrink-0">
      <path d="M6 0h20l16 16.500V50a6 6 0 0 1-6 6H6a6 6 0 0 1-6-6V6a6 6 0 0 1 6-6z" fill="#e6252b" />
      <path d="M26 0l16 16.500H26z" fill="#f0686c" />
      <text x="21" y="42" textAnchor="middle" fontSize="14" fontWeight="800" fill="#fff">
        PDF
      </text>
    </svg>
  )
}

function CloudIcon() {
  return (
    <svg viewBox="0 0 28 20" className="h-5 w-7 shrink-0">
      <path d="M6.500 20a6.500 6.500 0 0 1-1.200-12.700A8.500 8.500 0 0 1 22 8a6.100 6.100 0 0 1-.5 12z" fill="#0070ff" />
      <path d="M8.500 11.500l3 3 6-7.500" fill="none" stroke="#fff" strokeWidth="1.800" />
    </svg>
  )
}
